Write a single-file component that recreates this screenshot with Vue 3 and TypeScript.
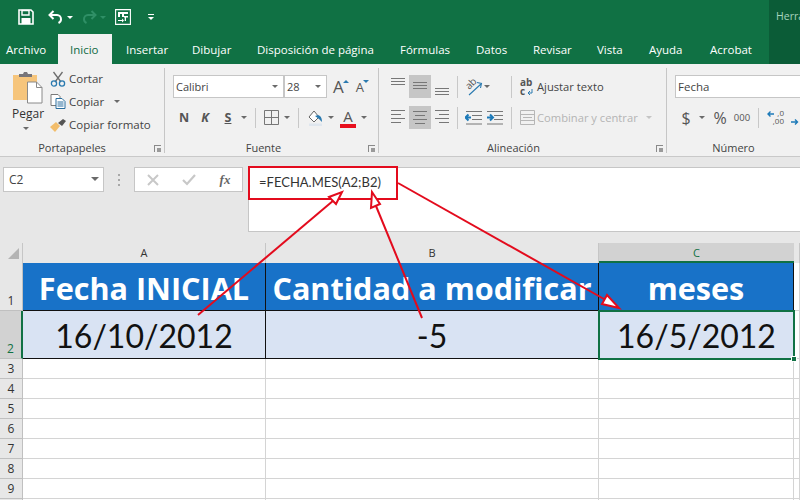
<script setup lang="ts">
const tabs: string[] = ['Archivo','Inicio','Insertar','Dibujar','Disposición de página','Fórmulas','Datos','Revisar','Vista','Ayuda','Acrobat'];
const emptyRows: number[] = [3,4,5,6,7,8,9,10];
</script>

<template>
  <div class="app">
    <div class="top">
      <div class="head">
        <div class="qat">
          <svg class="q save" width="16" height="16" viewBox="0 0 16 16"><path d="M1 1h12l2 2v12H1z" fill="none" stroke="#fff" stroke-width="1.6"/><path d="M4 1.500h7v4.500H4z" fill="none" stroke="#fff" stroke-width="1.400"/><path d="M3.500 9h9v6h-9z" fill="#fff"/></svg>
          <svg class="q undo" width="16" height="14" viewBox="0 0 16 14"><path d="M5.500 1 1.500 5l4 4" fill="none" stroke="#fff" stroke-width="2"/><path d="M2 5h7a4.200 4.200 0 0 1 4 4.200c0 1.600-1 3-2.500 3.800" fill="none" stroke="#fff" stroke-width="2"/></svg>
          <i class="caret white c1"></i>
          <svg class="q redo" width="16" height="14" viewBox="0 0 16 14"><path d="M10.500 1 14.500 5l-4 4" fill="none" stroke="#2f8f66" stroke-width="2"/><path d="M14 5H7a4.200 4.200 0 0 0-4 4.200c0 1.600 1 3 2.500 3.800" fill="none" stroke="#2f8f66" stroke-width="2"/></svg>
          <i class="caret dim c2"></i>
          <svg class="q cust" width="16" height="16" viewBox="0 0 16 16"><path d="M.6.600h14.800v14.800H.6z" fill="none" stroke="#fff" stroke-width="1.100"/><path d="M3 3h10v2H9v3H7V5H5v3H3z" fill="#fff"/><path d="M9 7h4v1.500h-2V12H9.700V8.500H9zM3 11h4V9.500L9 11.500 7 13.500V12H3z" fill="#fff"/></svg>
          <span class="more"><b></b><i class="caret white"></i></span>
        </div>
        <div class="tabs">
          <div v-for="t in tabs" :key="t" class="tab" :class="{ active: t === 'Inicio' }">{{ t }}</div>
        </div>
        <div class="tools">Herra</div>
      </div>

      <div class="ribbon">
        <section class="grp g1">
          <div class="body clip">
            <div class="paste">
              <svg width="30" height="32" viewBox="0 0 30 32"><path d="M0 3h24v25H0z" fill="#f6c57c"/><path d="M6 5V2h4l1-2h3l1 2h4v3z" fill="#77757a"/><path d="M14.500 10h9l5.500 5.500V31H14.500z" fill="#fff" stroke="#8a8a8a"/><path d="M23.500 10v5.500H29" fill="none" stroke="#8a8a8a"/></svg>
              <span class="pegar">Pegar</span>
              <i class="caret"></i>
            </div>
            <div class="clipcol">
              <div class="cl"><svg width="15" height="16" viewBox="0 0 15 16"><path d="M3 1l7.500 10M12 1 4.500 11" stroke="#6d6d6d" stroke-width="1.300" fill="none"/><circle cx="3.500" cy="12.500" r="2.600" fill="none" stroke="#2a7ab0" stroke-width="1.300"/><circle cx="11.500" cy="12.500" r="2.600" fill="none" stroke="#2a7ab0" stroke-width="1.300"/></svg><span>Cortar</span></div>
              <div class="cl"><svg width="15" height="15" viewBox="0 0 15 15"><path d="M.5.500h7l2 2v9h-9z" fill="#fff" stroke="#7a7a7a"/><path d="M5.500 4.500h6l3 3v7h-9z" fill="#fff" stroke="#2a6f9f"/><path d="M7 8h6M7 10h6M7 12h6" stroke="#2a6f9f"/></svg><span>Copiar</span><i class="caret cc"></i></div>
              <div class="cl"><svg width="16" height="14" viewBox="0 0 16 14"><path d="M0 9l6-5 4 4-5 6z" fill="#f2bd6b"/><path d="M8 5l5-4 3 2-4 5z" fill="#555"/></svg><span>Copiar formato</span></div>
            </div>
          </div>
          <div class="label l1">Portapapeles<i class="launch"></i></div>
        </section>

        <section class="grp g2">
          <div class="body col">
            <div class="frow r1">
              <div class="sel fname">Calibri<i class="caret"></i></div>
              <div class="sel fsize">28<i class="caret"></i></div>
              <div class="letter lbig">A<i class="up"></i></div>
              <div class="letter lsmall">A<i class="down"></i></div>
            </div>
            <div class="fgrid">
              <b class="fb">N</b>
              <b class="fb k">K</b>
              <b class="fb s">S</b>
              <i class="caret"></i>
              <em class="vsep"></em>
              <svg width="15" height="15" viewBox="0 0 15 15"><path d="M.5.500h14v14H.5zM.5 7.500h14M7.500.5v14" fill="none" stroke="#777"/></svg>
              <i class="caret"></i>
              <em class="vsep"></em>
              <svg width="15" height="16" viewBox="0 0 15 16"><path d="M1 7l5-6 5 6-5 5z" fill="#fff" stroke="#666"/><path d="M7 6c4-2 7 0 7 6l-3-3z" fill="#2a7ab0"/><path d="M1 13.500h13V16H1z" fill="#dfe6ee"/></svg>
              <i class="caret"></i>
              <div class="acolor">A<u></u></div>
              <i class="caret"></i>
            </div>
          </div>
          <div class="label l2">Fuente<i class="launch"></i></div>
        </section>

        <section class="grp g3">
          <div class="body col">
            <div class="arow r1">
              <div class="al top3"><s></s><s></s><s></s></div>
              <div class="al on mid3"><s></s><s></s><s></s></div>
              <div class="al bot3"><s></s><s></s><s></s></div>
              <em class="vsep"></em>
              <div class="orient"><span class="abrot">ab</span><svg width="17" height="17" viewBox="0 0 17 17"><path d="M3 16 15 5M11 3.500l4.500 1-1 4.500" fill="none" stroke="#2a7ab0" stroke-width="1.100"/></svg></div>
              <i class="caret"></i>
              <em class="vsep"></em>
              <div class="wrapic"><span>ab<br>c</span><svg width="6" height="7" viewBox="0 0 6 7"><path d="M5 0v4H1M3 2 1 4l2 2" stroke="#2a7ab0" fill="none"/></svg></div>
              <span class="atext">Ajustar texto</span>
            </div>
            <div class="arow r2">
              <div class="al left"><s></s><s></s><s></s><s></s></div>
              <div class="al on center"><s></s><s></s><s></s><s></s></div>
              <div class="al right"><s></s><s></s><s></s><s></s></div>
              <em class="vsep"></em>
              <svg class="ind" width="17" height="14" viewBox="0 0 17 14"><path d="M1 .5h16M7 4.500h10M7 8.500h10M1 13h16" stroke="#777"/><path d="M6 6.500H1M3.500 3.500 .5 6.500l3 3" stroke="#1d7ab8" stroke-width="2" fill="none"/></svg>
              <svg class="ind" width="17" height="14" viewBox="0 0 17 14"><path d="M0 .5h16M7 4.500h9M7 8.500h9M0 13h16" stroke="#777"/><path d="M0 6.500h5M3 3.500l3 3-3 3" stroke="#1d7ab8" stroke-width="2" fill="none"/></svg>
              <em class="vsep"></em>
              <svg class="merge" width="15" height="15" viewBox="0 0 15 15"><path d="M.5.500h14v14H.5zM.5 4.500h14M.5 10.500h14M3 7.500h9" fill="none" stroke="#b6b6b6"/></svg>
              <span class="atext off">Combinar y centrar</span>
              <i class="caret lt"></i>
            </div>
          </div>
          <div class="label l3">Alineación<i class="launch"></i></div>
        </section>

        <section class="grp g4">
          <div class="body col">
            <div class="sel numfmt">Fecha<i class="caret"></i></div>
            <div class="ngrid">
              <span class="dollar">$</span>
              <i class="caret"></i>
              <span class="pct">%</span>
              <span class="mil">000</span>
              <em class="vsep"></em>
              <div class="dec">
                <svg width="7" height="6" viewBox="0 0 7 6"><path d="M7 3H1M3.500.5 1 3l2.500 2.500" stroke="#1d7ab8" stroke-width="1.400" fill="none"/></svg>
                <span class="dtxt">,0<br>,00</span>
              </div>
              <div class="dec inc">
                <svg width="8" height="6" viewBox="0 0 8 6"><path d="M0 3h6M4 .5 6.500 3 4 5.500" stroke="#1d7ab8" stroke-width="1.400" fill="none"/></svg>
                <span class="dtxt">,00<br>,0</span>
              </div>
            </div>
          </div>
          <div class="label l4">Número</div>
        </section>
      </div>

      <div class="fbar">
        <div class="namebox">C2<i class="caret large"></i></div>
        <div class="dots"><b></b><b></b><b></b></div>
        <div class="fxbox">
          <svg width="12" height="12" viewBox="0 0 12 12"><path d="M1 1l10 10M11 1 1 11" stroke="#c8c8c8" stroke-width="2"/></svg>
          <svg width="14" height="12" viewBox="0 0 14 12"><path d="M1 6l4 4 8-9" stroke="#c8c8c8" stroke-width="2.200" fill="none"/></svg>
          <span class="fx">fx</span>
        </div>
        <div class="formula">
          =FECHA.MES(A2;B2)
          <div class="redbox"></div>
        </div>
      </div>

      <div class="sheet">
        <div class="corner"><i></i></div>
        <div class="ch">A</div>
        <div class="ch">B</div>
        <div class="ch sel-col">C</div>
        <div class="ch"></div>

        <div class="rh tall">1</div>
        <div class="hcell">Fecha INICIAL</div>
        <div class="hcell">Cantidad a modificar</div>
        <div class="hcell">meses</div>
        <div class="blank tall"></div>

        <div class="rh tall sel-row">2</div>
        <div class="dcell">16/10/2012</div>
        <div class="dcell">-5</div>
        <div class="dcell active-cell">16/5/2012<i class="handle"></i></div>
        <div class="blank tall"></div>

        <template v-for="n in emptyRows" :key="n">
          <div class="rh">{{ n }}</div>
          <div class="blank"></div>
          <div class="blank"></div>
          <div class="blank"></div>
          <div class="blank"></div>
        </template>
      </div>
    </div>

    <svg class="arrows" width="800" height="500" viewBox="0 0 800 500">
      <g fill="none" stroke="#e30b1d" stroke-width="2">
        <path d="M198 315 334 200"/>
        <path d="M342 192 336 204 329 197Z" fill="#fff"/>
        <path d="M422 318 376 206"/>
        <path d="M372 192 380 204 371 208Z" fill="#fff"/>
        <path d="M398 183 604 299"/>
        <path d="M619 308 602 304 607 295Z" fill="#fff"/>
      </g>
    </svg>
  </div>
</template>

<style>
html, body { margin: 0; background: #fff; overflow: hidden; }
</style>

<style scoped>
.app { position: relative; width: 800px; height: 500px; overflow: hidden; font-family: "Open Sans", "Noto Sans", sans-serif; color: #444; }
.top { display: flex; flex-direction: column; height: 500px; }

.head { position: relative; height: 64px; background: #107144; display: flex; flex-direction: column; flex: none; }
.qat { height: 34px; display: flex; align-items: center; position: relative; }
.q { flex: none; }
.save { margin-left: 18px; }
.undo { margin-left: 14px; }
.c1 { margin-left: 3px; }
.redo { margin-left: 8px; }
.c2 { margin-left: 3px; }
.cust { margin-left: 9px; }
.more { margin-left: 17px; display: flex; flex-direction: column; gap: 2px; align-items: center; }
.more b { display: block; width: 6px; height: 1px; background: #fff; }
.caret { display: inline-block; width: 0; height: 0; border-left: 3.500px solid transparent; border-right: 3.500px solid transparent; border-top: 3.500px solid #6a6a6a; flex: none; }
.caret.white { border-top-color: #fff; }
.caret.dim { border-top-color: #2f8f66; }
.caret.lt { border-top-color: #c4c4c4; }

.tabs { height: 30px; display: grid; grid-template-columns: 58px 54px 66px 65px 143px 76px 57px 64px 52px 61px 73px; }
.tab { color: #fff; font-size: 11.500px; line-height: 26px; padding: 3px 0 1px 14px; white-space: nowrap; }
.tab:first-child { padding-left: 6px; }
.tab.active { background: #f1f1f1; color: #0f6b43; padding-left: 12px; }
.tools { position: absolute; right: 0; top: 0; width: 24px; height: 64px; padding-left: 7px; background: #0b5c37; color: #a8d4bf; font-size: 10.500px; line-height: 32px; overflow: hidden; white-space: nowrap; }

.ribbon { height: 93px; flex: none; background: #f1f1f1; border-bottom: 1px solid #c9c9c9; box-sizing: border-box; display: flex; }
.grp { position: relative; flex: none; box-sizing: border-box; border-right: 1px solid #c6c6c6; margin: 4px 0 3px; display: flex; flex-direction: column; }
.g1 { width: 165px; }
.g2 { width: 214px; }
.g3 { width: 288px; }
.g4 { width: 133px; border-right: 0; }
.body { height: 72px; flex: none; }
.col { display: flex; flex-direction: column; }
.label { position: relative; flex: 1; text-align: center; font-size: 11px; line-height: 15px; color: #444; }
.l1 { padding-right: 20px; }
.l2 { padding-right: 16px; }
.l3 { padding-right: 18px; }
.launch { position: absolute; right: 3px; top: 5px; width: 6px; height: 6px; border: 1px solid #8a8a8a; border-width: 1px 0 0 1px; }
.launch::after { content: ""; position: absolute; right: 0; bottom: 0; width: 4px; height: 4px; background: #9a9a9a; }

.clip { display: flex; }
.paste { width: 50px; margin-top: 4px; padding-left: 13px; box-sizing: border-box; display: flex; flex-direction: column; align-items: flex-start; }
.pegar { font-size: 12px; line-height: 16px; margin: 2px 0 0 -1px; color: #333; }
.paste .caret { margin: 5px 0 0 10px; }
.clipcol { display: flex; flex-direction: column; margin-top: -1px; }
.cl { height: 23px; display: flex; align-items: center; font-size: 11.500px; color: #444; white-space: nowrap; }
.cl svg { width: 16px; flex: none; margin-right: 3px; }
.cc { margin-left: 10px; }

.sel { position: relative; height: 23px; box-sizing: border-box; background: #fff; border: 1px solid #c6c6c6; font-size: 11px; line-height: 21px; padding-left: 2px; color: #444; }
.sel .caret { position: absolute; right: 5px; top: 9px; }
.frow { display: flex; align-items: center; }
.frow.r1 { margin: 7px 0 0 8px; height: 23px; }
.fname { width: 111px; flex: none; box-sizing: border-box; }
.fsize { width: 43px; flex: none; }
.letter { position: relative; flex: none; color: #555; font-family: "Open Sans", sans-serif; line-height: 20px; }
.letter i { position: absolute; width: 0; height: 0; border-left: 3px solid transparent; border-right: 3px solid transparent; }
.lbig { margin-left: 6px; font-size: 17px; }
.lbig .up { right: -5px; top: 3px; border-bottom: 3px solid #2a7ab0; }
.lsmall { margin-left: 12px; font-size: 13px; }
.lsmall .down { right: -5px; top: 3px; border-top: 3px solid #2a7ab0; }

.fgrid { margin: 8px 0 0 9px; height: 23px; display: grid; grid-template-columns: 20px 22px 24px 8px 14px 18px 14px 8px 26px 6px 28px 4px; align-items: center; justify-items: center; }
.fb { font-size: 12.500px; color: #555; font-family: "Open Sans", sans-serif; }
.k { font-style: italic; }
.s { text-decoration: underline; }
.vsep { display: block; width: 1px; height: 20px; background: #c8c8c8; flex: none; }
.acolor { position: relative; width: 16px; font-size: 15px; line-height: 17px; text-align: center; color: #555; height: 20px; }
.acolor u { position: absolute; left: 0; right: 0; bottom: 0; height: 4px; background: #e8101e; }

.arow { display: flex; align-items: center; margin-left: 8px; height: 23px; }
.arow.r1 { margin-top: 7px; }
.arow.r2 { margin-top: 8px; }
.al { width: 22px; height: 23px; flex: none; display: flex; flex-direction: column; gap: 2px; align-items: center; box-sizing: border-box; padding-top: 3px; }
.al s { display: block; width: 14px; height: 1px; background: #777; }
.al.on { background: #c6c6c6; }
.top3 { padding-top: 3px; }
.mid3 { padding-top: 7px; }
.bot3 { padding-top: 13px; }
.r2 .al { gap: 3px; padding-top: 4px; }
.r2 .al.on { padding-top: 5px; }
.left { align-items: flex-start; padding-left: 4px; }
.left s:nth-child(even) { width: 10px; }
.center s:nth-child(even) { width: 10px; }
.right { align-items: flex-end; padding-right: 4px; }
.right s:nth-child(even) { width: 10px; }
.arow .vsep { margin: 0 7px 0 4px; height: 22px; }
.orient { position: relative; width: 18px; height: 18px; margin-right: 1px; flex: none; }
.orient svg { position: absolute; left: 1px; top: 1px; }
.abrot { position: absolute; left: 0; top: 0; font-size: 10px; line-height: 11px; color: #555; transform: rotate(-45deg); }
.arow .caret + .vsep { margin-left: 21px; margin-right: 8px; }
.wrapic { position: relative; width: 13px; height: 18px; flex: none; font-size: 10px; font-weight: 700; line-height: 9px; color: #555; }
.wrapic svg { position: absolute; right: 0; bottom: 0; }
.atext { margin-left: 4px; font-size: 11.200px; color: #444; white-space: nowrap; }
.atext.off { color: #b4b4b4; margin-left: 2px; }
.ind { flex: none; margin-right: 5px; }
.ind + .vsep { margin-left: 2px !important; margin-right: 8px !important; }
.merge { flex: none; }
.lt { margin-left: 8px; }

.numfmt { margin: 7px 0 0 8px; width: 132px; flex: none; font-size: 11.500px; }
.numfmt .caret { right: 0; }
.ngrid { margin: 8px 0 0 12px; height: 23px; display: grid; grid-template-columns: 14px 18px 18px 26px 6px 30px 24px; align-items: center; justify-items: center; color: #555; }
.dollar { font-size: 16px; }
.pct { font-size: 16px; }
.mil { font-size: 9.500px; }
.dec { position: relative; width: 100%; height: 17px; font-size: 8px; line-height: 8px; }
.dtxt { position: absolute; right: 7px; top: 0; text-align: right; }
.dec svg { position: absolute; left: 6px; top: 2px; }
.inc .dtxt { right: 0; }
.inc svg { left: 0; top: 10px; }

.fbar { height: 86px; flex: none; background: #e7e7e7; display: flex; align-items: flex-start; padding-top: 10px; box-sizing: border-box; }
.namebox { position: relative; width: 101px; height: 25px; margin-left: 3px; flex: none; box-sizing: border-box; background: #fff; border: 1px solid #c6c6c6; font-size: 12px; line-height: 23px; padding-left: 5px; color: #444; }
.namebox .caret { position: absolute; right: 4px; top: 9px; border-left-width: 4px; border-right-width: 4px; border-top-width: 4px; }
.dots { width: 30px; flex: none; padding-top: 7px; display: flex; flex-direction: column; align-items: center; gap: 3px; }
.dots b { width: 2px; height: 2px; background: #a8a8a8; }
.fxbox { width: 109px; height: 25px; flex: none; box-sizing: border-box; background: #fff; border: 1px solid #c6c6c6; display: grid; grid-template-columns: 36px 36px 36px; align-items: center; justify-items: center; }
.fx { font: italic bold 13px "Liberation Serif", serif; color: #666; }
.formula { position: relative; margin-left: 5px; flex: none; width: 552px; height: 65px; box-sizing: border-box; background: #fff; border: 1px solid #c6c6c6; border-right: 0; padding: 6px 0 0 10px; font: 13px/16px Lato, sans-serif; color: #333; }
.redbox { position: absolute; left: -1px; top: -2px; width: 150px; height: 34px; box-sizing: border-box; border: 2px solid #e30b1d; }

.sheet { flex: 1; min-height: 0; background: #fff; display: grid; grid-template-columns: 23px 243px 333px 195px 6px; grid-template-rows: 20px 48px 48px repeat(8, 20px); }
.corner { position: relative; background: #e7e7e7; border-right: 1px solid #c6c6c6; box-sizing: border-box; }
.corner i { position: absolute; right: 3px; bottom: 4px; width: 0; height: 0; border-left: 11px solid transparent; border-bottom: 11px solid #b4b4b4; }
.ch { background: #e7e7e7; border-right: 1px solid #c6c6c6; box-sizing: border-box; text-align: center; font-size: 11px; line-height: 20px; color: #333; }
.sel-col { background: #d2d2d2; color: #107144; border-bottom: 2px solid #107144; border-right: 0; line-height: 19px; }
.rh { background: #e7e7e7; border-right: 1px solid #c0c0c0; border-bottom: 1px solid #c0c0c0; box-sizing: border-box; text-align: center; font-size: 12px; line-height: 20px; color: #333; }
.rh.tall { display: flex; align-items: flex-end; justify-content: center; line-height: 19px; }
.sel-row { background: #d2d2d2; color: #107144; border-right: 2px solid #107144; }
.hcell, .dcell { box-sizing: border-box; display: flex; align-items: center; justify-content: center; border-right: 1px solid #111; border-bottom: 1px solid #111; white-space: nowrap; position: relative; }
.hcell { background: #1872c8; color: #fff; font-family: "Open Sans", sans-serif; font-weight: 700; font-size: 30.600px; padding-top: 2px; }
.dcell { background: #d9e3f3; color: #111; font-family: Lato, sans-serif; font-size: 32px; padding-top: 1px; }
.active-cell { z-index: 2; outline: 2px solid #107144; outline-offset: -1px; border: 0; }
.handle { position: absolute; right: -3px; bottom: -3px; width: 6px; height: 6px; background: #107144; border: 1px solid #fff; box-sizing: border-box; }
.blank { background: #fff; border-right: 1px solid #d4d4d4; border-bottom: 1px solid #d4d4d4; box-sizing: border-box; }

.arrows { position: absolute; left: 0; top: 0; pointer-events: none; z-index: 5; }
</style>
